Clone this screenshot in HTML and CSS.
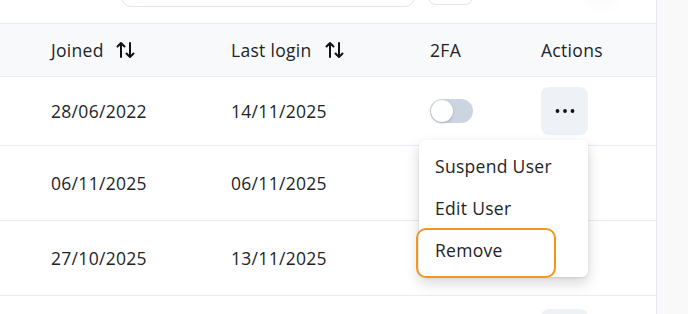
FILE: index.html
```html
<!DOCTYPE html>
<html>
<head>
<meta charset="utf-8">
<link rel="stylesheet" href="styles.css">
</head>
<body>
<div class="page">
  <div class="main">
    <div class="toolbar">
      <div class="search"></div>
      <div class="filter-btn"></div>
      <div class="avatar-shadow"></div>
    </div>
    <div class="table">
      <div class="row head">
        <div class="cell">Joined <svg class="sort" width="20" height="18" viewBox="0 0 20 18"><path d="M5 16V2M1.5 5.5L5 2l3.5 3.5M14 2v14M10.5 12.5L14 16l3.5-3.5" fill="none" stroke="#111" stroke-width="2" stroke-linecap="round" stroke-linejoin="round"/></svg></div>
        <div class="cell">Last login <svg class="sort" width="20" height="18" viewBox="0 0 20 18"><path d="M5 16V2M1.5 5.5L5 2l3.5 3.5M14 2v14M10.5 12.5L14 16l3.5-3.5" fill="none" stroke="#111" stroke-width="2" stroke-linecap="round" stroke-linejoin="round"/></svg></div>
        <div class="cell">2FA</div>
        <div class="cell">Actions</div>
      </div>
      <div class="row r1">
        <div class="cell">28/06/2022</div>
        <div class="cell">14/11/2025</div>
        <div class="cell"><span class="toggle"><span class="knob"></span></span></div>
        <div class="cell">
          <div class="action-wrap">
            <button class="more"><svg width="20" height="6" viewBox="0 0 20 6"><circle cx="2.5" cy="3" r="1.9"/><circle cx="10" cy="3" r="1.9"/><circle cx="17.5" cy="3" r="1.9"/></svg></button>
            <div class="menu">
              <div class="item">Suspend User</div>
              <div class="item">Edit User</div>
              <div class="item focus">Remove</div>
            </div>
          </div>
        </div>
      </div>
      <div class="row r2">
        <div class="cell">06/11/2025</div>
        <div class="cell">06/11/2025</div>
        <div class="cell"></div>
        <div class="cell"></div>
      </div>
      <div class="row r2">
        <div class="cell">27/10/2025</div>
        <div class="cell">13/11/2025</div>
        <div class="cell"></div>
        <div class="cell"></div>
      </div>
      <div class="row r4">
        <div class="cell"></div>
        <div class="cell"></div>
        <div class="cell"></div>
        <div class="cell"><button class="more"></button></div>
      </div>
    </div>
  </div>
  <div class="side"></div>
</div>
</body>
</html>
```
FILE: styles.css
```css
* { box-sizing: border-box; }
html, body { margin: 0; padding: 0; }
body {
  width: 688px;
  height: 314px;
  overflow: hidden;
  background: #fff;
  font-family: "Open Sans", "Liberation Sans", sans-serif;
  font-size: 17.5px;
  letter-spacing: 0.3px;
  color: #222428;
}
.page { display: flex; height: 314px; overflow: hidden; }
.main {
  width: 657px;
  flex-shrink: 0;
  border-right: 1px solid #e6e8ef;
  display: flex;
  flex-direction: column;
}
.side { flex: 1; background: #f9f9fa; }
.toolbar {
  height: 24px;
  flex-shrink: 0;
  position: relative;
  border-bottom: 1px solid #e8ebf1;
}
.search {
  position: absolute;
  left: 121px;
  top: -30px;
  width: 294px;
  height: 37px;
  border: 1px solid #e1e4ea;
  border-radius: 10px;
}
.filter-btn {
  position: absolute;
  left: 428px;
  top: -30px;
  width: 45px;
  height: 35px;
  border: 1px solid #e1e4ea;
  border-radius: 8px;
}
.avatar-shadow {
  position: absolute;
  left: 578px;
  top: -22px;
  width: 46px;
  height: 38px;
  border-radius: 50%;
  background: radial-gradient(closest-side, rgba(0,0,0,0.025), rgba(0,0,0,0));
}
.table { display: flex; flex-direction: column; flex-shrink: 0; }
.row {
  display: grid;
  grid-template-columns: 180px 199px 111px 1fr;
  padding-left: 51px;
  align-items: center;
  border-bottom: 1px solid #e8ebf1;
  flex-shrink: 0;
}
.cell { display: flex; align-items: center; }
.head { height: 53px; background: #f8f9fb; }
.sort { margin-left: 12px; }
.head .cell:nth-child(2) .sort { margin-left: 13px; }
.r1 { height: 69px; }
.r2 { height: 75px; }
.r4 { height: 60px; align-items: start; border-bottom: none; padding-top: 13px; }
.toggle {
  width: 43px;
  height: 24px;
  border-radius: 12px;
  background: #cbd5e1;
  position: relative;
  display: inline-block;
}
.knob {
  position: absolute;
  left: 1px;
  top: 1px;
  width: 22px;
  height: 22px;
  border-radius: 50%;
  background: #fff;
  box-shadow: 0 1px 3px rgba(0,0,0,0.2);
}
.action-wrap { position: relative; }
.more {
  width: 47px;
  height: 48px;
  border: none;
  border-radius: 8px;
  background: #eef2f7;
  display: flex;
  align-items: center;
  justify-content: center;
  padding: 0;
}
.more svg { fill: #111; }
.menu {
  position: absolute;
  right: 0;
  top: 53px;
  width: 169px;
  height: 137px;
  background: #fff;
  border-radius: 6px;
  box-shadow: 0 6px 14px rgba(0,0,0,0.16), 0 1px 3px rgba(0,0,0,0.08);
  padding: 5px 0 6px;
  z-index: 2;
}
.item {
  height: 42px;
  display: flex;
  align-items: center;
  padding-left: 16px;
  position: relative;
}
.item.focus::after {
  content: "";
  position: absolute;
  left: -3px;
  top: -1px;
  width: 136px;
  height: 46px;
  border: 2px solid #f7941d;
  border-radius: 10px;
}
```
